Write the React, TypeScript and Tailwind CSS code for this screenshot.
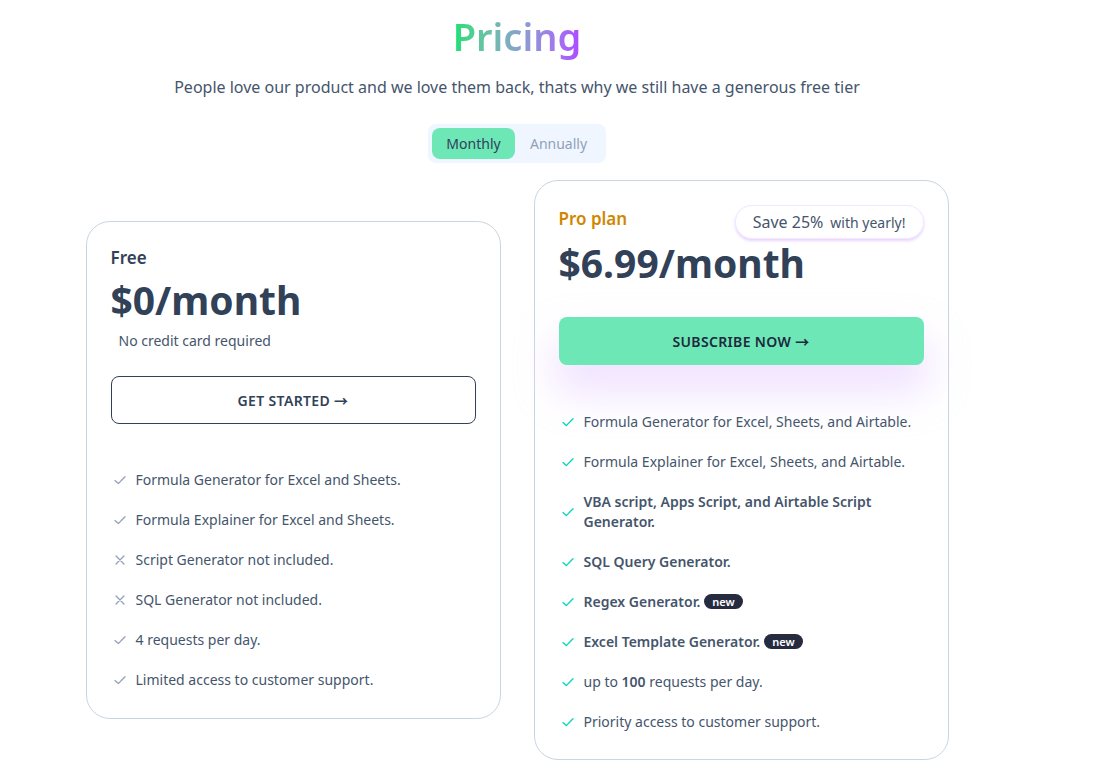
import React, { useState } from 'react';

type Feature = { text: React.ReactNode; included: boolean; tag?: boolean };

const freeFeatures: Feature[] = [
  { text: 'Formula Generator for Excel and Sheets.', included: true },
  { text: 'Formula Explainer for Excel and Sheets.', included: true },
  { text: 'Script Generator not included.', included: false },
  { text: 'SQL Generator not included.', included: false },
  { text: '4 requests per day.', included: true },
  { text: 'Limited access to customer support.', included: true },
];

const proFeatures: Feature[] = [
  { text: 'Formula Generator for Excel, Sheets, and Airtable.', included: true },
  { text: 'Formula Explainer for Excel, Sheets, and Airtable.', included: true },
  { text: <span className="font-semibold">VBA script, Apps Script, and Airtable Script Generator.</span>, included: true },
  { text: <span className="font-semibold">SQL Query Generator.</span>, included: true },
  { text: <span className="font-semibold">Regex Generator.</span>, included: true, tag: true },
  { text: <span className="font-semibold">Excel Template Generator.</span>, included: true, tag: true },
  { text: <>up to <span className="font-semibold">100</span> requests per day.</>, included: true },
  { text: 'Priority access to customer support.', included: true },
];

const Check = ({ className }: { className: string }) => (
  <svg width="14" height="14" viewBox="0 0 14 14" fill="none" className={className}>
    <path d="M2 7.6 L5.3 10.6 L12 3.8" stroke="currentColor" strokeWidth="1.3" strokeLinecap="round" strokeLinejoin="round" />
  </svg>
);

const Cross = () => (
  <svg width="14" height="14" viewBox="0 0 14 14" fill="none" className="text-slate-400">
    <path d="M3 3 L11 11 M11 3 L3 11" stroke="currentColor" strokeWidth="1.3" strokeLinecap="round" />
  </svg>
);

const FeatureList = ({ items, pro }: { items: Feature[]; pro?: boolean }) => (
  <ul className="flex flex-col gap-[20px]">
    {items.map((f, i) => (
      <li key={i} className="flex items-center gap-[9px] text-[14px] leading-[20px] text-slate-600">
        <span className="shrink-0 ml-[2px]">
          {f.included ? <Check className={pro ? 'text-teal-400' : 'text-slate-400'} /> : <Cross />}
        </span>
        <span>
          {f.text}
          {f.tag && (
            <span className="ml-[4px] inline-block rounded-full bg-[#262b40] px-[8px] text-[11px] leading-[15px] font-semibold text-white align-[1px]">
              new
            </span>
          )}
        </span>
      </li>
    ))}
  </ul>
);

export default function App() {
  const [annual, setAnnual] = useState(false);

  return (
    <div className="min-h-screen bg-white pr-[63px]" style={{ fontFamily: '"Noto Sans", "Noto Sans CJK JP", sans-serif' }}>
      <div className="flex flex-col items-center pt-[10px]">
        <h1 className="text-[38px] leading-[52px] font-semibold bg-gradient-to-r from-green-400 to-purple-500 bg-clip-text text-transparent">
          Pricing
        </h1>
        <p className="mt-[13px] text-[16px] leading-[24px] text-slate-600">
          People love our product and we love them back, thats why we still have a generous free tier
        </p>

        <div className="mt-[25px] flex rounded-lg bg-blue-50 p-[4px]">
          <button
            onClick={() => setAnnual(false)}
            className={`w-[83px] h-[31px] rounded-lg text-[14px] ${!annual ? 'bg-[#6ee7b7] text-slate-700' : 'text-slate-400'}`}
          >
            Monthly
          </button>
          <button
            onClick={() => setAnnual(true)}
            className={`w-[87px] h-[31px] rounded-lg text-[14px] ${annual ? 'bg-[#6ee7b7] text-slate-700' : 'text-slate-400'}`}
          >
            Annually
          </button>
        </div>

        <div className="mt-[17px] flex items-center gap-[33px]">
          {/* Free */}
          <div className="w-[415px] rounded-[24px] border border-slate-300 px-[24px] pt-[24px] pb-[28px]">
            <h3 className="text-[17px] leading-[24px] font-semibold text-slate-700">Free</h3>
            <div className="mt-[6px] text-[39px] leading-[48px] font-bold text-slate-700">$0/month</div>
            <p className="mt-[7px] ml-[8px] text-[14px] leading-[20px] text-slate-600">No credit card required</p>
            <button className="mt-[25px] w-full h-[48px] rounded-lg border border-slate-700 text-[14px] font-semibold text-slate-700 tracking-wide">
              GET STARTED →
            </button>
            <div className="mt-[46px]">
              <FeatureList items={freeFeatures} />
            </div>
          </div>

          {/* Pro */}
          <div className="w-[415px] rounded-[24px] border border-slate-300 px-[24px] pt-[26px] pb-[27px]">
            <div className="flex items-start justify-between">
              <h3 className="text-[17px] leading-[24px] font-semibold text-yellow-600">Pro plan</h3>
              <span className="-mt-[2px] flex gap-[7px] rounded-full border border-purple-100 bg-white px-[17px] h-[34px] items-center shadow-[0_2px_3px_rgba(192,132,252,0.35)]">
                <span className="text-[16px] text-slate-600">Save 25%</span>
                <span className="text-[14px] text-slate-600">with yearly!</span>
              </span>
            </div>
            <div className="mt-0 text-[39px] leading-[48px] font-bold text-slate-700">$6.99/month</div>
            <button className="mt-[30px] w-full h-[48px] rounded-lg bg-[#6ee7b7] text-[14px] font-semibold text-slate-800 tracking-wide shadow-[0_24px_40px_4px_rgba(233,213,255,0.7)]">
              SUBSCRIBE NOW →
            </button>
            <div className="mt-[47px]">
              <FeatureList items={proFeatures} pro />
            </div>
          </div>
        </div>
      </div>
    </div>
  );
}
